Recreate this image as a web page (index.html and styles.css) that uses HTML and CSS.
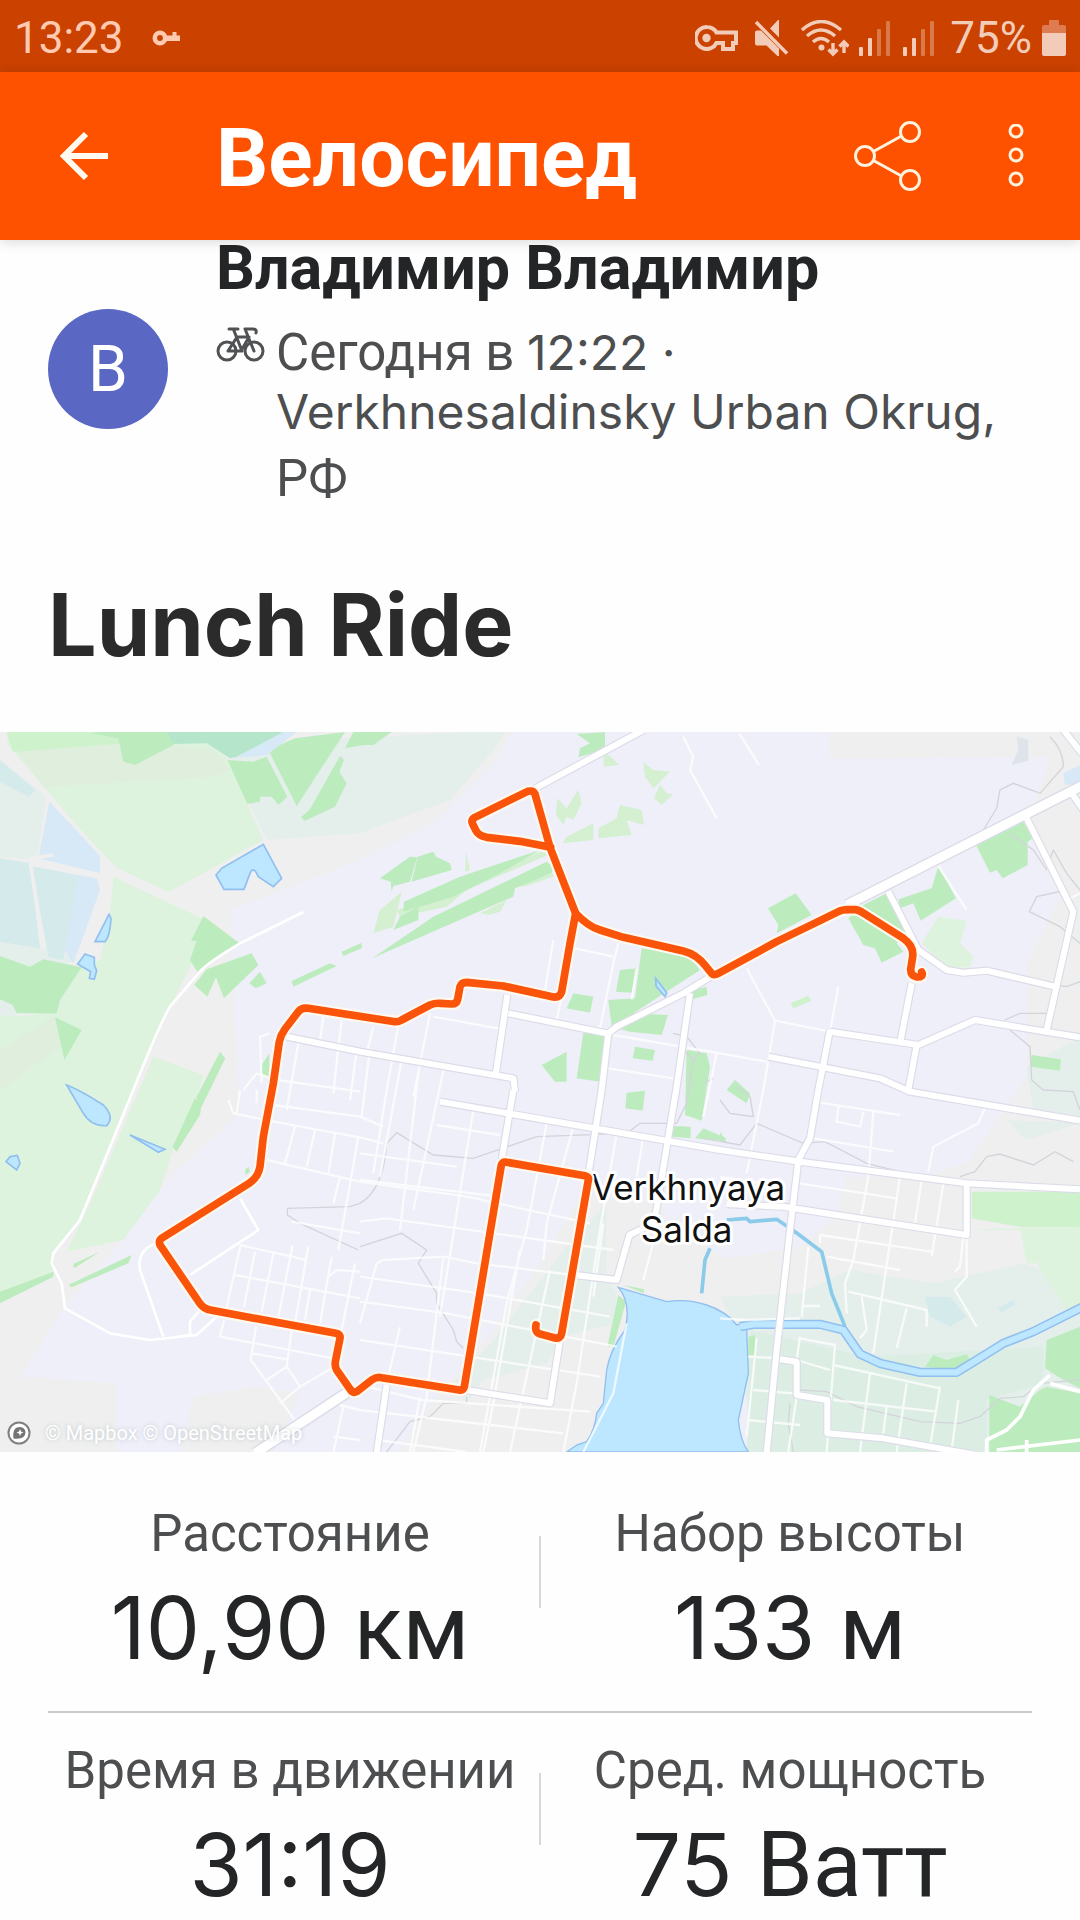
FILE: index.html
```html
<!DOCTYPE html>
<html lang="ru">
<head>
  <meta charset="UTF-8">
  <meta name="viewport" content="width=device-width, initial-scale=1.0">
  <title>Велосипед</title>
  <link rel="stylesheet" href="styles.css">
</head>
<body>
  <div class="status-bar">
    <span class="clock">13:23</span>
    <svg class="small-key" width="28" height="16" viewBox="0 0 28 16">
      <circle cx="8" cy="8" r="5.2" fill="none" stroke="#ffc9b2" stroke-width="4.6"/>
      <path d="M14 5.500h6.500V2h4v3.500H28V11H14z" fill="#ffc9b2"/>
    </svg>
    <div class="status-icons">
      <svg class="icon-key" width="43" height="26" viewBox="0 0 43 26">
        <path d="M12 2a11 11 0 1 0 9.500 16h6.500v6h10v-6h3V7.500H21.500A11 11 0 0 0 12 2z" fill="none" stroke="#f3ccb9" stroke-width="4"/>
        <circle cx="11.500" cy="13" r="4.200" fill="#f3ccb9"/>
      </svg>
      <svg class="icon-mute" width="33" height="38" viewBox="0 0 33 38">
        <path d="M0 13.500q0-2 2-2h4L24 29.500V37h-1.500L11.500 26.500H2q-2 0-2-2zM15 9.500 23 1h1v17.500z" fill="#f3ccb9"/>
        <path d="M1 3l31 31.500" stroke="#f3ccb9" stroke-width="3.400"/>
      </svg>
      <svg class="icon-wifi" width="48" height="37" viewBox="0 0 48 37">
        <g fill="none" stroke="#f3ccb9" stroke-width="3.400">
          <path d="M1 10q19-17 39 0M6 16q14-12 28 0M12 22q8-7 16 0"/>
          <path d="M32 23v11M27.500 29.500l4.500 4.500 4.500-4.500M43 33V22M38.500 26.500 43 22l4.500 4.500"/>
        </g>
        <circle cx="20.500" cy="27.500" r="3" fill="#f3ccb9"/>
      </svg>
      <svg class="icon-signal" width="31" height="35" viewBox="0 0 31 35" fill="#f3ccb9">
        <rect y="26" width="4" height="9" rx="1"/>
        <rect x="9" y="17" width="4" height="18" rx="1"/>
        <rect x="18" y="8" width="4" height="27" rx="1" opacity=".4"/>
        <rect x="27" width="4" height="35" rx="1" opacity=".4"/>
      </svg>
      <svg class="icon-signal-2" width="31" height="35" viewBox="0 0 31 35" fill="#f3ccb9">
        <rect y="26" width="4" height="9" rx="1"/>
        <rect x="9" y="17" width="4" height="18" rx="1"/>
        <rect x="18" y="8" width="4" height="27" rx="1" opacity=".4"/>
        <rect x="27" width="4" height="35" rx="1" opacity=".4"/>
      </svg>
      <span class="percent">75%</span>
      <svg class="icon-battery" width="24" height="36" viewBox="0 0 24 36">
        <path d="M7 5V1q0-1 1-1h8q1 0 1 1v4h5q2 0 2 2v6H0V7q0-2 2-2z" fill="#de7b50"/>
        <path d="M0 13h24v21q0 2-2 2H2q-2 0-2-2z" fill="#f3ccb9"/>
      </svg>
    </div>
  </div>

  <header class="toolbar">
    <button class="icon-button back-button" aria-label="Назад">
      <svg width="50" height="50" viewBox="0 0 50 50" fill="none" stroke="#fffaf0" stroke-width="6">
        <path d="M48 25H4M26 3 4 25l22 22"/>
      </svg>
    </button>
    <h1 class="toolbar-title">Велосипед</h1>
    <button class="icon-button share-button" aria-label="Поделиться">
      <svg width="68" height="72" viewBox="0 0 68 72" fill="none" stroke="#fff3df" stroke-width="3">
        <circle cx="11" cy="36" r="9.500"/>
        <circle cx="56" cy="12" r="9.500"/>
        <circle cx="56" cy="60" r="9.500"/>
        <path d="M19.500 31.500 47.500 16M19.500 40.500l28 15.500"/>
      </svg>
    </button>
    <button class="icon-button more-button" aria-label="Ещё">
      <svg width="16" height="64" viewBox="0 0 16 64" fill="none" stroke="#fff3df" stroke-width="3">
        <circle cx="8" cy="7" r="6"/>
        <circle cx="8" cy="31" r="6"/>
        <circle cx="8" cy="55" r="6"/>
      </svg>
    </button>
  </header>

  <main>
    <section class="athlete">
      <div class="avatar">В</div>
      <div class="athlete-info">
        <h2 class="athlete-name">Владимир Владимир</h2>
        <div class="meta">
          <svg class="bike" width="50" height="36" viewBox="0 0 50 36" fill="none" stroke="#505153" stroke-width="3" stroke-linecap="round" stroke-linejoin="round">
            <circle cx="11" cy="24" r="9"/>
            <circle cx="38" cy="24" r="9"/>
            <path d="M12 24 21 10h12M12 24h13l8-14M26 24 17.500 2.500M13 2h9M29 2h8q4 0 3 4M29 2l9 22"/>
          </svg>
          <p class="meta-text">
            <span class="meta-time">Сегодня в <span class="latin">12:22 ·</span></span>
            <span class="meta-place latin">Verkhnesaldinsky Urban Okrug,</span>
            <span class="meta-country">РФ</span>
          </p>
        </div>
      </div>
    </section>

    <h2 class="activity-name">Lunch Ride</h2>

    <div class="map">
      <svg class="map-canvas" viewBox="0 6 3240 2160">
        <rect y="6" width="3240" height="2160" fill="#eeeff8"/>

        <!-- ground tints -->
        <g fill="#efefef">
          <path d="M0 0H1540L1480 100 1300 280 1080 390 690 540 710 960 720 1150 500 1350 360 1540 200 1720 60 1940 350 1960V2166H0z"/>
          <path d="M580 2000 760 1970 900 1990 820 2166H540z"/>
          <path d="M2490 0H3240V1480L3240 1900 2160 1700 2160 1590 2400 1550 2580 1400 2900 1300 3080 1040 3080 700 3180 500 3080 300 3150 80 2490 85z"/>
          <path d="M1740 1400 1980 1420 2000 1480 2200 1600 2280 1780 1800 2166H1200L1260 2060 1480 1800 1620 1600z"/>
          <path d="M2540 1340H2800V1500H2500z"/>
        </g>
        <g fill="#e4efec">
          <path d="M540 50 1520 0 1480 60 1350 210 1080 310 800 330 680 80z"/>
          <path d="M0 90 140 200 110 390 0 380zM0 620 130 650 240 690 100 720 0 680zM0 805 50 830V860H0z"/>
          <path d="M1700 1550 1820 1420V1640L1850 1690V1780L1690 1820 1640 1900 1450 1950 1400 2020 1360 1960 1480 1830z"/>
          <path d="M2160 1700 2400 1690 2550 1620 2800 1660 3070 1600 3180 1640 3240 1740V2166H2260L2210 1800z"/>
          <path d="M3080 1010 3240 920V1160L3100 1140zM3020 1170 3240 1180 3080 1230z"/>
        </g>
        <g fill="#dceee4">
          <path d="M2250 1800 2600 1880 3130 1850V1960L2960 2010V2166H2240z"/>
        </g>

        <!-- meadows -->
        <g fill="#ddf3dd">
          <path d="M30 0H340L520 40H620L680 85 790 330 500 490 360 430 300 370 140 180 20 40z"/>
          <path d="M340 440 605 565 575 700 510 830 230 1480 160 1560 165 1620 0 1700V860L100 855 250 700 300 690 330 560z"/>
          <path d="M460 980 610 1035 590 1110 520 1260 480 1380 370 1530 200 1565 280 1400 400 1120z"/>
          <path d="M2815 560 2900 572 2880 640 2920 680 2910 712H2840L2765 640z"/>
          <path d="M2870 1500 3240 1490V1740L3200 1740 3110 1600 3080 1600 3062 1500z"/>
        </g>
        <path d="M50 60 340 20 640 60 690 120 640 140 130 170z" fill="#e0eedd"/>
        <path d="M0 960 160 860 200 940 110 1000 0 1080z" fill="#e0eedd"/>
        <g fill="#cdf2cc">
          <path d="M2915 1385H3240V1490L3070 1492 2915 1465z"/>
          <path d="M20 6H340L380 40 40 66z"/>
          <path d="M2372 820 2425 797 2433 812 2380 835z"/>
        </g>
        <g fill="#d4f0d0">
          <path d="M1672 205 1700 235 1735 180 1745 220 1720 270 1700 260 1690 285 1668 255zM1930 97 1960 120 2010 125 1960 175 1935 140zM1980 165 2000 190 2020 192 1985 225 1962 205zM1795 325 1795 295 1850 265 1860 225 1925 240 1932 285 1880 270 1895 315zM1688 340 1700 320 1780 280V330zM1810 60 1858 105 1812 110z"/>
          <path d="M1120 610 1140 540 1205 485 1180 590zM1190 540 1360 480 1620 365 1650 372 1400 480 1340 530 1200 560zM1440 550 1520 510 1500 545 1470 555zM1550 470 1660 430V440L1580 468zM1398 365 1410 420 1395 425z"/>
        </g>

        <!-- woods -->
        <g fill="#bcecbd">
          <path d="M275 10 355 25 370 95 405 105 520 45 560 6H300z"/>
          <path d="M682 90 760 95 800 80 862 200 835 225 815 200H780V215L742 222z"/>
          <path d="M805 60 885 25 1035 6 890 228zM1035 55 1060 6H1175L1120 40z"/>
          <path d="M1020 78 1032 90 1018 125 1040 160 1005 230 915 272 903 262 930 238z"/>
          <path d="M0 678 90 710 130 688 245 712 180 810 170 850H50L38 825 0 808zM165 862 245 900 193 990z"/>
          <path d="M610 558 718 640 592 725 570 690 590 632H573zM583 765 620 718 755 670 775 705 672 805 648 742 622 800zM748 760 780 725 800 760 768 775z"/>
          <path d="M875 753 990 700 1010 708 880 770zM1025 665 1085 638V655L1030 678z"/>
          <path d="M660 965 676 985 600 1140 590 1100zM585 1105 605 1120 600 1155 530 1265 518 1250z"/>
          <path d="M0 1685 160 1625V1640L0 1720zM205 1665 395 1575 385 1600 215 1672zM220 1602 300 1565 222 1615zM735 1320 745 1310 750 1325 737 1335zM785 1005 808 970V1045L785 1030z"/>
          <path d="M1140 445 1230 380 1252 382 1230 455 1180 468 1175 485 1172 455zM1253 380 1300 365 1308 380 1350 400 1355 420 1235 455z"/>
          <path d="M1212 515 1380 440 1620 360 1500 430 1360 500 1210 545zM1180 600 1200 560 1255 530V570z"/>
          <path d="M1118 684 1300 560 1640 395 1660 410 1655 430 1545 475 1540 500z"/>
          <path d="M1730 12 1815 6V50L1775 70 1735 82 1740 55 1770 40zM1080 6H1175L1120 45H1080z"/>
          <path d="M1925 655 2060 670 2100 720 1900 850 2004 855 1985 915 1890 905 1835 890 1825 810 1905 805z"/>
          <path d="M1860 720 1910 715 1895 788 1848 785zM1720 790 1780 800 1770 848 1700 835zM1750 910 1825 912 1800 1055 1730 1045zM1625 1005 1700 965V1055H1665zM1905 950 1965 960 1958 992 1898 985zM2080 780 2120 770 2122 795 2070 810z"/>
          <path d="M2060 960 2120 970 2130 1010 2105 1172 2055 1155zM2020 1188 2072 1190V1225L2015 1220zM2085 1225 2110 1195 2180 1225 2150 1232z"/>
          <path d="M1880 1088 1935 1082 1928 1142 1876 1135zM2180 1080 2205 1050 2250 1090 2240 1120zM2160 1205 2180 1235H2160z"/>
          <path d="M2304 535 2387 490 2435 555 2330 610 2335 585zM2545 565 2590 525 2660 490 2725 610 2690 640 2710 665 2645 698 2625 655 2590 645z"/>
          <path d="M2696 508 2795 475 2815 408 2868 505 2762 572 2740 520 2700 535zM2928 345 3070 275 3098 325 3083 335V405L3008 445 2990 420 2970 428z"/>
          <path d="M3095 975 3183 988 3180 1022 3090 1010z"/>
          <path d="M1855 1695 1878 1715 1840 1850H1822zM1870 1665 1932 1678V1690zM2245 1820 2265 1815V1875H2245z"/>
          <path d="M2775 1910 2800 1875 2840 1890 2900 1872 2910 1890 2860 1920zM3140 1830 3240 1790V1975L3190 1950 3135 1915z"/>
          <path d="M2968 1995 3060 2030 3120 1980 3140 1970 3240 1990V2166H2968z"/>
        </g>
        <path d="M500 6H850L800 60 690 85 620 40 520 42z" fill="#b5e6cb"/>

        <!-- marsh and ponds -->
        <g fill="#d5eaeb">
          <path d="M0 385 90 400 120 655 0 635zM0 90 105 180 85 200 0 155z"/>
          <path d="M2775 1700 2850 1700 2900 1760 2850 1790 2790 1760zM2993 1735 3040 1710 3045 1722 3005 1750z"/>
        </g>
        <g fill="#d7e8f6">
          <path d="M148 215 300 375V430L115 385zM850 6H890L800 75 700 85z"/>
          <path d="M180 640 230 430 290 445 300 480 220 700z"/>
          <path d="M3190 130 3240 105V160L3195 165z"/>
        </g>
        <path d="M95 402 235 435 190 690 145 680z" fill="#d5eaeb"/>
        <path d="M3050 20 3085 30V92L3035 105 3055 60z" fill="#dfe3ea"/>
        <path d="M148 205 310 380 350 420 500 490M90 402 290 440M92 402 130 660M90 385 160 375" fill="none" stroke="#efefef" stroke-width="11"/>
        <g fill="#bde6ff" stroke="#90bff0" stroke-width="5">
          <path d="M790 343 845 445 820 470 775 440Q760 405 750 430L732 478H672L648 435 665 415z"/>
          <path d="M327 553 333 565Q330 620 315 635H285zM255 672 283 682V705L290 722 283 748 268 745 272 725 233 702z"/>
          <path d="M200 1065Q240 1080 310 1125 345 1160 320 1187 275 1190 250 1150zM390 1215 495 1258 475 1267zM30 1280 52 1276 60 1300 50 1320 18 1295z"/>
          <path d="M1967 745 2000 788 1995 800 1968 768z"/>
        </g>

        <!-- lake and river -->
        <path d="M1855 1672 2000 1715Q2060 1705 2120 1725T2210 1785L2250 1775 2240 1800 2245 1930 2215 2070Q2220 2130 2245 2166H1700L1730 2145 1760 2135Q1785 2100 1790 2050L1810 2020 1820 1920Q1830 1860 1875 1800 1895 1720 1855 1672z" fill="#bde6ff" stroke="#90bff0" stroke-width="4"/>
        <g fill="none" stroke-linejoin="round">
          <path d="M2180 1470 2240 1465 2250 1475 2330 1468 2385 1505 2465 1565 2495 1690 2535 1790M2130 1555 2115 1590 2105 1690" stroke="#8acbea" stroke-width="11"/>
          <path d="M2220 1790 2260 1783H2460L2530 1800 2580 1872 2640 1900 2760 1927H2870L2930 1890 3010 1840 3100 1805 3250 1730" stroke="#90bff0" stroke-width="28"/>
          <path d="M2220 1790 2260 1783H2460L2530 1800 2580 1872 2640 1900 2760 1927H2870L2930 1890 3010 1840 3100 1805 3250 1730" stroke="#bde6ff" stroke-width="19"/>
        </g>

        <!-- railways and contours -->
        <g fill="none" stroke="#d3d4da" stroke-width="4">
          <path d="M1080 1420Q1150 1380 1160 1240L1190 1208 1300 1275 1420 1285 1610 1220 1880 1210 1920 1180 2030 1180 2060 1120 2080 990"/>
          <path d="M862 1435 1050 1430 1080 1420M862 1435V1455L900 1480 1075 1560M1080 1550 1205 1510 1280 1560 1255 1600 1310 1690V1720L1360 1800 1370 1835 1390 1855"/>
          <path d="M1160 2166 1230 2075 1290 2060 1330 2020H1400V2000M2110 1225 2220 1245 2270 1180 2410 1240 2475 1235 2600 1300 2720 1330"/>
          <path d="M2880 1340 2925 1325 2960 1280 3000 1272 3100 1305 3165 1265 3220 1295M2950 300 2990 235 3000 180 3040 160 3120 190 3190 110Q3190 60 3150 20"/>
          <path d="M2160 1110 2190 1150 2260 1160 2250 1100 2210 1070M2020 910 2060 920 2100 970 2080 990 2050 960M2110 1060 2140 1045"/>
          <path d="M3140 420 3100 360 3030 310M3145 400 3160 360 3200 430 3240 480M3200 480 3110 500 3088 545 3180 590 3240 640M3160 765 3200 770 3240 755M3015 870 3060 850 3140 850M3030 900 3090 950 3095 1050 3130 1080 3220 1085 3240 1140"/>
          <path d="M2400 1980 2480 1985 2570 2030 2760 2075 2880 2080 2940 2060 3000 2005 3070 2000 3120 1960 3240 1950M2370 2020 2365 2080 2380 2166"/>
        </g>

        <!-- minor streets -->
        <g fill="none" stroke="#fff" stroke-width="7" stroke-linejoin="round">
          <path d="M910 546 720 640Q620 700 600 725L510 830Q480 880 400 1080L240 1470 160 1570 155 1600 185 1660 195 1735 330 1810 450 1830 590 1815 650 1760M490 1820 420 1620Q410 1560 470 1540M570 1635 775 1500 720 1405M535 1820 570 1815 570 1775 600 1740" stroke-width="8"/>
          <g opacity=".75">
            <path d="M830 1050 1080 1085M820 1125 1080 1160 1150 1190M820 1175 1080 1222 1150 1240M800 1290 1080 1355 1400 1400 1770 1480M960 930 970 860M1010 1000 1025 870M895 940 860 1140M1015 950 1000 1090M1070 960 1050 1110M785 1060 780 920 810 910M730 1080 770 1030 830 1050M685 1110 700 1150 820 1175M720 1080 710 1150M770 1080V1120"/>
            <path d="M885 1190 855 1300M945 1200 920 1310M1005 1210 985 1330M1075 1220 1015 1560M1020 1340 1000 1420M875 1475 1080 1510M720 1545 920 1590M705 1635 1080 1705M722 1545 680 1730M765 1565 732 1730M820 1570 785 1745M878 1545 835 1760M925 1550 885 1780M995 1580 960 1780M1065 1600 1025 1800M930 1680 915 1770M985 1640 1010 1620 1080 1625"/>
            <path d="M672 1770 660 1820 1000 1885M768 1790 752 1890 800 1955 895 2085M875 1800 860 1910 800 1950M755 1870 860 1888M860 1910 900 1970 840 2020M900 1970 995 1915M1030 2030 1000 2166M1000 2120 1080 2130M1020 2025 1080 2040"/>
            <path d="M1110 955 1085 1160M1198 870 1160 1080 1120 1330M1120 890 1100 970M1290 850 1240 1100M1205 990 1140 1340M1300 860 1520 900M1420 1140 1320 1760M1335 1000 1240 1440M1260 990 1200 1500"/>
            <path d="M1080 1270 1370 1310M1310 1185 1500 1215M1080 1350 1500 1400M1080 1475 1160 1465 1840 1560M1130 1600 1150 1590 1330 1580 1430 1600 1720 1635M1080 1640 1440 1690 1830 1760M1080 1715 1340 1750 1850 1850M1080 1830 1800 1940M1100 1970 1265 2010 1770 2045M1080 2040 1690 2110M1130 2130 1400 2166"/>
            <path d="M1640 1180 1580 1500 1520 1720 1440 2166M1720 1190 1640 1480 1630 1590M1560 1560 1480 2020 1450 2166M1850 1210 1800 1500 1730 1960 1690 2166M1930 1220 1910 1340M1650 1620 1530 2166M1810 1480 1780 1700M1330 1580 1280 2000 1240 2166M1260 2000 1230 2166M1130 1600 1080 1780M1200 1790 1160 1960M1970 1500 1930 1650M1880 1780 1840 1990 1750 2166"/>
            <path d="M1660 630 1635 780M1725 655 1840 680M1855 640 1840 700 1800 895M1685 800 1670 870M1840 915 2160 970 2300 995M1825 1015 2020 1045M1910 715 1895 808M2150 970 2110 1160"/>
            <path d="M2050 20 2080 80 2070 120 2150 265M2218 10 2277 105M2240 715 2325 872 2490 905M2325 872 2290 1080 2240 1330M2515 770 2490 905M2815 408 2900 540M3200 510 3240 490"/>
            <path d="M2460 1118 2700 1155M2515 1130 2510 1175 2580 1190 2590 1145M2620 1145 2605 1340 2560 1590 2535 1660 2540 1750M2440 1225 2680 1265M2400 1360 2690 1405M2700 1340 2620 1870M2765 1350 2745 1480M2830 1360 2795 1580M2955 1135 2935 1180 2800 1250 2785 1325M2160 1340 2350 1370M2460 1540 2460 1515 2795 1565M2480 1580 2700 1620M2900 1510V1640L2865 1680 2930 1790M2890 1520 2880 1610 2865 1625"/>
            <path d="M2425 1550 2405 1760M2545 1685 2780 1740V1790M2585 1700 2600 1800 2580 1825M2720 1735 2690 1855M2410 1728H2460M2160 1765 2240 1770 2400 1765M2245 1880 2340 1885M2270 1825 2240 2120M2260 1980 2380 1990M2240 2070 2400 2085M2400 1825 2505 1845 2480 2166M2400 1820 2390 1890 2490 1920M2500 1905 2820 1975M2610 1930 2580 2166M2720 1960 2690 2166M2820 1970 2790 2150M2500 2010 2810 2045M2660 2030 2650 2110M2875 2010 2855 2160M2390 2000 2365 2166"/>
          </g>
          <path d="M2960 2166V2130L3020 2100 3060 2060 3100 1980 3150 1935M3080 2166V2130M2990 2160 3240 2130M3150 1960 3240 1985" stroke-width="11"/>
        </g>

        <!-- main roads, drawn twice to get a casing -->
        <g fill="none" stroke-linejoin="round">
          <g stroke="#dcdce9" stroke-width="25">
            <path d="M1930 0 1600 178M2140 735 2050 790 1850 890 1825 910 1805 1080 1765 1335M2070 790 2030 1070 1970 1435 1960 1480 1888 1515 1850 1650 1725 1635"/>
            <path d="M860 920 1080 965 1540 1045 1545 1085M1525 850 1830 912M1522 795 1487 1035M1320 1115 2160 1260 2400 1295 2900 1360 3240 1378M1540 1080 1505 1290"/>
            <path d="M2180 1422 2350 1430 2900 1515V1360M2490 900 2455 1080 2430 1225 2395 1290 2370 1500 2330 1860 2300 2170"/>
            <path d="M2665 485 2755 660 2840 720 2890 728 2960 722 3165 770M3080 265 3220 545 3140 900M2735 760 2702 930M2490 905 2755 945 2925 870 3240 922M2305 980 2640 1045 2730 1085 3240 1172M2750 945 2725 1080M3190 0 3250 75M3215 190 3250 240"/>
            <path d="M1400 1980 1650 2020 1680 1830M1160 1965 1130 2170M2340 1888 2390 1895V1995L2482 2010V2110L2650 2125 2930 2175"/>
            <path d="M2540 525 3250 165M1045 1985 765 2170" stroke-width="36"/>
          </g>
          <g stroke="#fff" stroke-width="18">
            <path d="M1930 0 1600 178M2140 735 2050 790 1850 890 1825 910 1805 1080 1765 1335M2070 790 2030 1070 1970 1435 1960 1480 1888 1515 1850 1650 1725 1635"/>
            <path d="M860 920 1080 965 1540 1045 1545 1085M1525 850 1830 912M1522 795 1487 1035M1320 1115 2160 1260 2400 1295 2900 1360 3240 1378M1540 1080 1505 1290"/>
            <path d="M2180 1422 2350 1430 2900 1515V1360M2490 900 2455 1080 2430 1225 2395 1290 2370 1500 2330 1860 2300 2170"/>
            <path d="M2665 485 2755 660 2840 720 2890 728 2960 722 3165 770M3080 265 3220 545 3140 900M2735 760 2702 930M2490 905 2755 945 2925 870 3240 922M2305 980 2640 1045 2730 1085 3240 1172M2750 945 2725 1080M3190 0 3250 75M3215 190 3250 240"/>
            <path d="M1400 1980 1650 2020 1680 1830M1160 1965 1130 2170M2340 1888 2390 1895V1995L2482 2010V2110L2650 2125 2930 2175"/>
            <path d="M2540 525 3250 165M1045 1985 765 2170" stroke-width="27"/>
          </g>
        </g>

        <g class="town-label">
          <text x="2064" y="1410">Verkhnyaya</text>
          <text x="2060" y="1537">Salda</text>
        </g>

        <!-- ride track -->
        <g fill="none" stroke-linejoin="round" stroke-linecap="round">
          <g stroke="#fff8ee" stroke-width="36">
            <path d="M1608 1785Q1603 1810 1625 1813L1665 1824Q1682 1827 1685 1810L1765 1350Q1768 1340 1755 1337L1515 1296Q1507 1296 1504 1305L1393 1970Q1390 1982 1378 1980L1145 1943Q1130 1940 1118 1948L1070 1985Q1060 1990 1052 1980L1010 1920Q1003 1908 1007 1890L1020 1825Q1022 1812 1008 1810L635 1741Q610 1737 598 1718L480 1545Q475 1533 485 1525L750 1358Q775 1340 780 1310L790 1220 820 1060 838 935Q842 915 855 897L895 845Q905 832 925 835L1185 875Q1195 876 1205 870L1290 825Q1305 819 1320 820L1355 822Q1370 822 1373 808L1380 770Q1384 757 1400 757L1510 768 1660 801Q1680 803 1685 785L1710 640 1727 550 1650 352 1605 192Q1600 180 1583 184L1425 262Q1412 270 1418 282L1428 302Q1435 317 1460 322L1560 334 1652 352"/>
            <path d="M1727 550Q1765 590 1800 600L1870 622 2050 663Q2090 673 2117 708L2133 728Q2140 738 2155 730L2330 635 2460 572 2515 545Q2525 539 2545 539H2565Q2575 539 2590 549L2710 625Q2742 647 2738 680L2732 718Q2732 738 2750 741 2772 742 2765 726"/>
          </g>
          <g stroke="#fa540a" stroke-width="23">
            <path d="M1608 1785Q1603 1810 1625 1813L1665 1824Q1682 1827 1685 1810L1765 1350Q1768 1340 1755 1337L1515 1296Q1507 1296 1504 1305L1393 1970Q1390 1982 1378 1980L1145 1943Q1130 1940 1118 1948L1070 1985Q1060 1990 1052 1980L1010 1920Q1003 1908 1007 1890L1020 1825Q1022 1812 1008 1810L635 1741Q610 1737 598 1718L480 1545Q475 1533 485 1525L750 1358Q775 1340 780 1310L790 1220 820 1060 838 935Q842 915 855 897L895 845Q905 832 925 835L1185 875Q1195 876 1205 870L1290 825Q1305 819 1320 820L1355 822Q1370 822 1373 808L1380 770Q1384 757 1400 757L1510 768 1660 801Q1680 803 1685 785L1710 640 1727 550 1650 352 1605 192Q1600 180 1583 184L1425 262Q1412 270 1418 282L1428 302Q1435 317 1460 322L1560 334 1652 352"/>
            <path d="M1727 550Q1765 590 1800 600L1870 622 2050 663Q2090 673 2117 708L2133 728Q2140 738 2155 730L2330 635 2460 572 2515 545Q2525 539 2545 539H2565Q2575 539 2590 549L2710 625Q2742 647 2738 680L2732 718Q2732 738 2750 741 2772 742 2765 726"/>
          </g>
        </g>
      </svg>
      <div class="attribution">
        <svg width="24" height="24" viewBox="0 0 24 24">
          <circle cx="12" cy="12" r="10.500" fill="#fff" stroke="#808080" stroke-width="2"/>
          <path d="M6.500 17.500Q5 6 13 6a5.500 5.500 0 0 1 5.500 5.500Q18 19 6.500 17.500z" fill="#757575"/>
          <path d="M13 8l1 2.500 2.500 1-2.500 1-1 2.500-1-2.500-2.500-1 2.500-1z" fill="#fff"/>
        </svg>
        <span>© Mapbox © OpenStreetMap</span>
      </div>
    </div>

    <section class="stats">
      <div class="stats-row">
        <div class="stat">
          <div class="stat-label">Расстояние</div>
          <div class="stat-value">10,90 <span class="unit">км</span></div>
        </div>
        <div class="stat-divider"></div>
        <div class="stat">
          <div class="stat-label">Набор высоты</div>
          <div class="stat-value">133 <span class="unit">м</span></div>
        </div>
      </div>
      <div class="stats-row">
        <div class="stat">
          <div class="stat-label">Время в движении</div>
          <div class="stat-value">31:19</div>
        </div>
        <div class="stat-divider"></div>
        <div class="stat">
          <div class="stat-label">Сред. мощность</div>
          <div class="stat-value">75 <span class="unit">Ватт</span></div>
        </div>
      </div>
    </section>
  </main>
</body>
</html>
```
FILE: styles.css
```css
* {
  box-sizing: border-box;
}

body {
  margin: 0;
  font-family: Roboto, sans-serif;
  background-color: #fefefe;
  color: #242527;
}

h1, h2, p {
  margin: 0;
}

svg {
  display: block;
  flex-shrink: 0;
}

/* Status bar */
.status-bar {
  display: flex;
  align-items: center;
  height: 72px;
  padding: 4px 14px 0;
  background-color: #ca4100;
  color: #f3ccb9;
  font-size: 44px;
  line-height: 52px;
}

.clock {
  color: #ffc9b2;
}

.small-key {
  margin-left: 28px;
}

.status-icons {
  display: flex;
  align-items: center;
  margin-left: auto;
}

.icon-mute {
  margin-left: 17px;
}

.icon-wifi {
  margin-left: 13px;
}

.icon-signal {
  margin-left: 10px;
}

.icon-signal-2 {
  margin-left: 13px;
}

.percent {
  margin-left: 16px;
}

.icon-battery {
  margin-left: 10px;
}

/* Toolbar */
.toolbar {
  position: relative;
  display: flex;
  align-items: center;
  height: 168px;
  padding: 0 48px 0 60px;
  background-color: #fe5200;
  box-shadow: 0 2px 12px rgba(0, 0, 0, 0.15);
}

.icon-button {
  padding: 0;
  border: none;
  background: none;
  cursor: pointer;
}

.toolbar-title {
  flex: 1;
  margin-left: 106px;
  padding-top: 4px;
  color: #fff;
  font-size: 82px;
  line-height: 96px;
  font-weight: 700;
}

.share-button {
  margin-right: 86px;
}

.more-button {
  margin-right: 8px;
}

/* Athlete */
.athlete {
  display: flex;
  gap: 48px;
  padding: 0 48px;
}

.avatar {
  display: flex;
  flex-shrink: 0;
  align-items: center;
  justify-content: center;
  width: 120px;
  height: 120px;
  margin-top: 69px;
  border-radius: 50%;
  background-color: #5a68c4;
  color: #fff;
  font-size: 64px;
}

.athlete-name {
  font-size: 61px;
  line-height: 56px;
  font-weight: 700;
}

.meta {
  display: flex;
  gap: 10px;
  margin-top: 27px;
}

.bike {
  margin-top: 4px;
}

.meta-text {
  color: #4d4e50;
  font-size: 51px;
}

.meta-text > span {
  display: block;
}

.latin {
  font-family: Inter, sans-serif;
  font-size: 48px;
}

.meta-time {
  line-height: 60px;
}

.meta-place {
  line-height: 58px;
}

.meta-country {
  line-height: 76px;
}

.activity-name {
  padding: 56px 48px 55px;
  color: #2b2b2b;
  font-family: Inter, sans-serif;
  font-size: 86px;
  line-height: 104px;
  font-weight: 700;
}

/* Map */
.map {
  position: relative;
}

.map-canvas {
  width: 100%;
  height: auto;
}

.town-label {
  font-family: Inter, sans-serif;
  font-size: 105px;
  text-anchor: middle;
  fill: #111;
  stroke: #fff;
  stroke-width: 18px;
  stroke-linejoin: round;
  paint-order: stroke;
}

.attribution {
  position: absolute;
  left: 7px;
  bottom: 7px;
  display: flex;
  align-items: center;
  gap: 14px;
  color: #fff;
  font-size: 20px;
  line-height: 24px;
  text-shadow: 0 0 4px rgba(120, 140, 150, 0.4);
}

/* Stats */
.stats {
  padding: 24px 48px 0;
}

.stats-row {
  display: flex;
  padding-top: 28px;
}

.stats-row + .stats-row {
  margin-top: 34px;
  border-top: 2px solid #cbcbcb;
}

.stat {
  flex: 1;
  text-align: center;
  white-space: nowrap;
}

.stat-divider {
  width: 2px;
  height: 72px;
  margin: 32px 7px 0;
  background-color: #d8d8d8;
}

.stat-label {
  color: #4d4e50;
  font-size: 51px;
  line-height: 60px;
}

.stat-value {
  margin-top: 16px;
  font-family: Inter, sans-serif;
  font-size: 86px;
  line-height: 96px;
}

.unit {
  font-family: Roboto, sans-serif;
  font-size: 90px;
}
```
